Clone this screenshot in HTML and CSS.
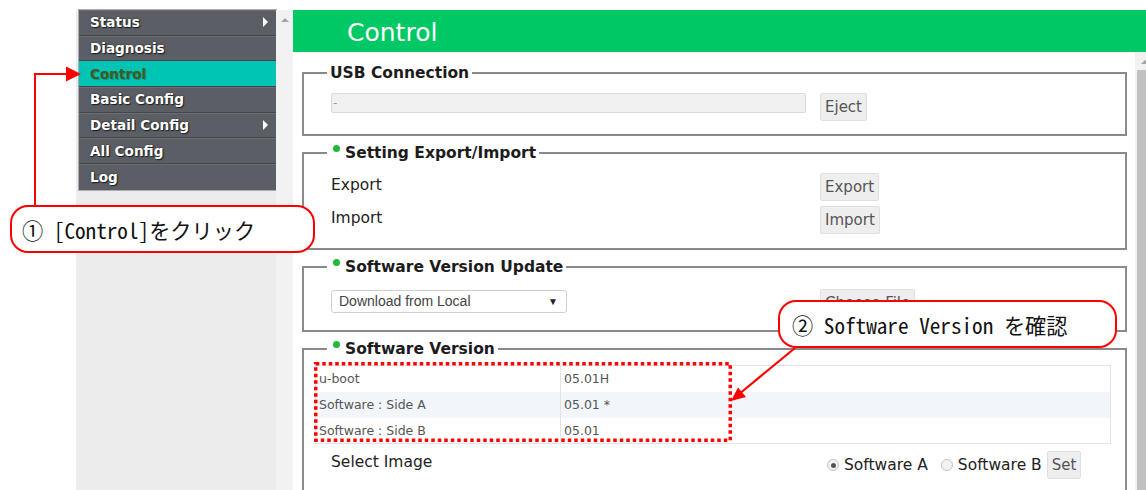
FILE: index.html
```html
<!DOCTYPE html>
<html lang="ja">
<head>
<meta charset="utf-8">
<title>Control</title>
<link rel="stylesheet" href="styles.css">
</head>
<body>
<div class="app">
  <aside class="side">
    <div class="side-pane">
      <nav class="menu">
        <a class="item" href="#">Status<i class="caret"></i></a>
        <a class="item" href="#">Diagnosis</a>
        <a class="item active" href="#">Control</a>
        <a class="item" href="#">Basic Config</a>
        <a class="item" href="#">Detail Config<i class="caret"></i></a>
        <a class="item" href="#">All Config</a>
        <a class="item" href="#">Log</a>
      </nav>
    </div>
    <div class="side-track"><i class="arrow-up"></i></div>
  </aside>

  <main class="main">
    <header class="page-title">Control</header>
    <div class="main-body">
      <div class="content">
        <fieldset class="box box-usb">
          <legend>USB Connection</legend>
          <div class="row">
            <input class="field" type="text" value="-" readonly>
            <button class="btn" type="button">Eject</button>
          </div>
        </fieldset>

        <fieldset class="box box-settings">
          <legend><span class="dot"></span>Setting Export/Import</legend>
          <div class="row">
            <span class="label">Export</span>
            <button class="btn" type="button">Export</button>
          </div>
          <div class="row">
            <span class="label">Import</span>
            <button class="btn" type="button">Import</button>
          </div>
        </fieldset>

        <fieldset class="box box-update">
          <legend><span class="dot"></span>Software Version Update</legend>
          <div class="row">
            <div class="select">Download from Local<span class="select-arrow">▼</span></div>
            <button class="btn" type="button">Choose File</button>
          </div>
        </fieldset>

        <fieldset class="box box-version">
          <legend><span class="dot"></span>Software Version</legend>
          <table class="versions">
            <tr><td>u-boot</td><td>05.01H</td></tr>
            <tr><td>Software : Side A</td><td>05.01 *</td></tr>
            <tr><td>Software : Side B</td><td>05.01</td></tr>
          </table>
          <div class="row row-image">
            <span class="label">Select Image</span>
            <div class="choices">
              <label class="radio"><span class="radio-mark checked"></span>Software A</label>
              <label class="radio"><span class="radio-mark"></span>Software B</label>
              <button class="btn" type="button">Set</button>
            </div>
          </div>
        </fieldset>
      </div>
      <div class="vscroll">
        <i class="arrow-up"></i>
        <div class="thumb"></div>
      </div>
    </div>
  </main>
</div>

<svg class="marks" width="1146" height="490" viewBox="0 0 1146 490">
  <polyline points="35,206 35,74 67,74" fill="none" stroke="#f00" stroke-width="2"/>
  <polygon points="81,74 66,66.5 66,81.5" fill="#f00"/>
  <line x1="795" y1="348" x2="741" y2="392.5" stroke="#f00" stroke-width="2.2"/>
  <polygon points="731,401 746,397 738,387.5" fill="#f00"/>
  <rect x="315.75" y="363.75" width="414.5" height="76.5" fill="none" stroke="#f00" stroke-width="3.5" stroke-dasharray="3.5 3"/>
</svg>

<div class="callout callout-menu">① [Control]をクリック</div>
<div class="callout callout-version">② Software Version を確認</div>
</body>
</html>
```

FILE: styles.css
```css
* { box-sizing: border-box; }

html, body {
  margin: 0;
  height: 490px;
  overflow: hidden;
  background: #fff;
}

body {
  position: relative;
  font-family: "DejaVu Sans", Verdana, sans-serif;
  color: #222;
}

/* ---------- layout ---------- */
.app {
  display: flex;
  height: 480px;
  margin: 10px 0 0 76px;
}

.side {
  display: flex;
  flex: none;
  width: 217px;
}

.side-pane {
  width: 200px;
  padding-left: 3px;
  background: #ececec;
}

.side-track {
  width: 17px;
  background: #f2f2f2;
  display: flex;
  justify-content: center;
  padding-top: 8px;
}

.arrow-up {
  display: block;
  width: 0;
  height: 0;
  border-left: 4px solid transparent;
  border-right: 4px solid transparent;
  border-bottom: 4px solid #a3a3a3;
}

/* ---------- side menu ---------- */
.menu {
  display: flex;
  flex-direction: column;
  background: #5b5e64;
  outline: 1px solid #a9abae;
}

.item {
  display: flex;
  align-items: center;
  justify-content: space-between;
  height: 25.7px;
  padding: 0 8px 0 11px;
  font-weight: bold;
  font-size: 13.6px;
  color: #fff;
  text-decoration: none;
  text-shadow: 1px 1px 1px #1d1e22, 0 0 2px #2a2b30;
  border-bottom: 1px solid #45474c;
  box-shadow: inset 0 1px 0 #6a6d73;
}

.item:last-child { border-bottom: 0; }

.item.active {
  background: #00c4b4;
  color: #43591d;
  text-shadow: 1px 1px 1px rgba(0, 0, 0, 0.25);
  box-shadow: none;
}

.caret {
  width: 0;
  height: 0;
  border-top: 5px solid transparent;
  border-bottom: 5px solid transparent;
  border-left: 5px solid #fff;
}

/* ---------- main ---------- */
.main {
  flex: 1;
  display: flex;
  flex-direction: column;
  min-width: 0;
}

.page-title {
  height: 42px;
  flex: none;
  background: #00c864;
  color: #fff;
  font-size: 25px;
  line-height: 46px;
  padding-left: 54px;
}

.main-body {
  flex: 1;
  display: flex;
  min-height: 0;
}

.content {
  flex: 1;
  padding: 11px 8px 0 9px;
}

.vscroll {
  width: 11px;
  flex: none;
  background: #f1f1f1;
  padding: 8px 0 0 2px;
  display: flex;
  flex-direction: column;
  align-items: center;
}

.vscroll .arrow-up { margin-left: 6px; }

.thumb {
  flex: 1;
  width: 100%;
  margin-top: 6px;
  background: #c1c1c1;
}

/* ---------- fieldsets ---------- */
.box {
  margin: 0 0 7px;
  min-width: 0;
  border: 2px solid #8a8a8a;
  padding: 0 14px 13px 11px;
}

.box legend {
  margin-left: 12px;
  padding: 0 3px;
  font-weight: bold;
  font-size: 15.5px;
  line-height: 20px;
  color: #1c1c1c;
}

.dot {
  display: inline-block;
  width: 7px;
  height: 7px;
  border-radius: 50%;
  background: #23b83a;
  margin: 0 5px 0 3px;
  position: relative;
  top: -6px;
}

.box-usb { padding-top: 10px; }
.box-settings { padding-top: 10px; padding-bottom: 14px; }
.box-update { padding-top: 12px; }
.box-version { padding-top: 6px; }

.row {
  display: grid;
  grid-template-columns: 489px auto;
  justify-content: start;
  align-items: start;
  padding-left: 16px;
}

.row + .row { margin-top: 5px; }

.label {
  font-size: 15.5px;
  line-height: 20px;
  padding-top: 2px;
  color: #222;
}

.field {
  width: 475px;
  height: 20px;
  margin: 0;
  padding: 0 1px;
  background: #f0f0f0;
  border: 1px solid #dadada;
  border-radius: 2px;
  font-family: "DejaVu Sans", sans-serif;
  font-size: 12px;
  color: #9a9a9a;
}

.btn {
  height: 28px;
  margin: 0;
  padding: 0 4px;
  background: #eeeeee;
  border: 1px solid #e0e0e0;
  border-radius: 2px;
  font-family: "DejaVu Sans", Verdana, sans-serif;
  font-size: 15px;
  color: #555;
  justify-self: start;
}

.select {
  position: relative;
  width: 236px;
  height: 23px;
  margin-top: 1px;
  padding-left: 7px;
  border: 1px solid #cfcfcf;
  border-radius: 3px;
  background: #fff;
  font-family: "Liberation Sans", Arial, sans-serif;
  font-size: 14px;
  line-height: 21px;
  color: #444;
}

.select-arrow {
  position: absolute;
  right: 8px;
  top: 0;
  font-size: 10px;
  color: #222;
}

/* ---------- version table ---------- */
.versions {
  width: 100%;
  border-collapse: collapse;
  border: 1px solid #e3e3e3;
  font-size: 12.5px;
  color: #555;
}

.versions td {
  height: 26px;
  padding: 0 3px;
}

.versions td:first-child {
  width: 245px;
  border-right: 1px solid #e3e3e3;
}

.versions tr:nth-child(2) td { background: #f2f5f9; }

.row-image { margin-top: 7px; }
.row-image .label { padding-top: 0; line-height: 22px; }

.choices {
  display: flex;
  align-items: center;
  margin-left: 6px;
}

.radio {
  display: flex;
  align-items: center;
  font-size: 15.5px;
  color: #222;
  margin-right: 5px;
}

.radio + .radio { margin-left: 7px; }

.radio-mark {
  width: 12px;
  height: 12px;
  margin: 0 5px 0 1px;
  border-radius: 50%;
  border: 1px solid #c4c4c4;
  background: #f2f2f2;
  display: flex;
  align-items: center;
  justify-content: center;
}

.radio-mark.checked::after {
  content: "";
  width: 5px;
  height: 5px;
  border-radius: 50%;
  background: #555;
}

/* ---------- annotations ---------- */
.marks {
  position: absolute;
  left: 0;
  top: 0;
  pointer-events: none;
}

.callout {
  position: absolute;
  height: 48px;
  display: flex;
  align-items: center;
  background: #fff;
  border: 2.5px solid #f00;
  border-radius: 18px;
  font-family: "Noto Sans CJK JP", sans-serif;
  font-feature-settings: "hwid" 1;
  font-size: 21.2px;
  color: #111;
  white-space: nowrap;
}

.callout-menu {
  left: 10px;
  top: 205px;
  width: 305px;
  padding-left: 10px;
}

.callout-version {
  left: 778px;
  top: 300px;
  width: 339px;
  padding-left: 12px;
}
```
